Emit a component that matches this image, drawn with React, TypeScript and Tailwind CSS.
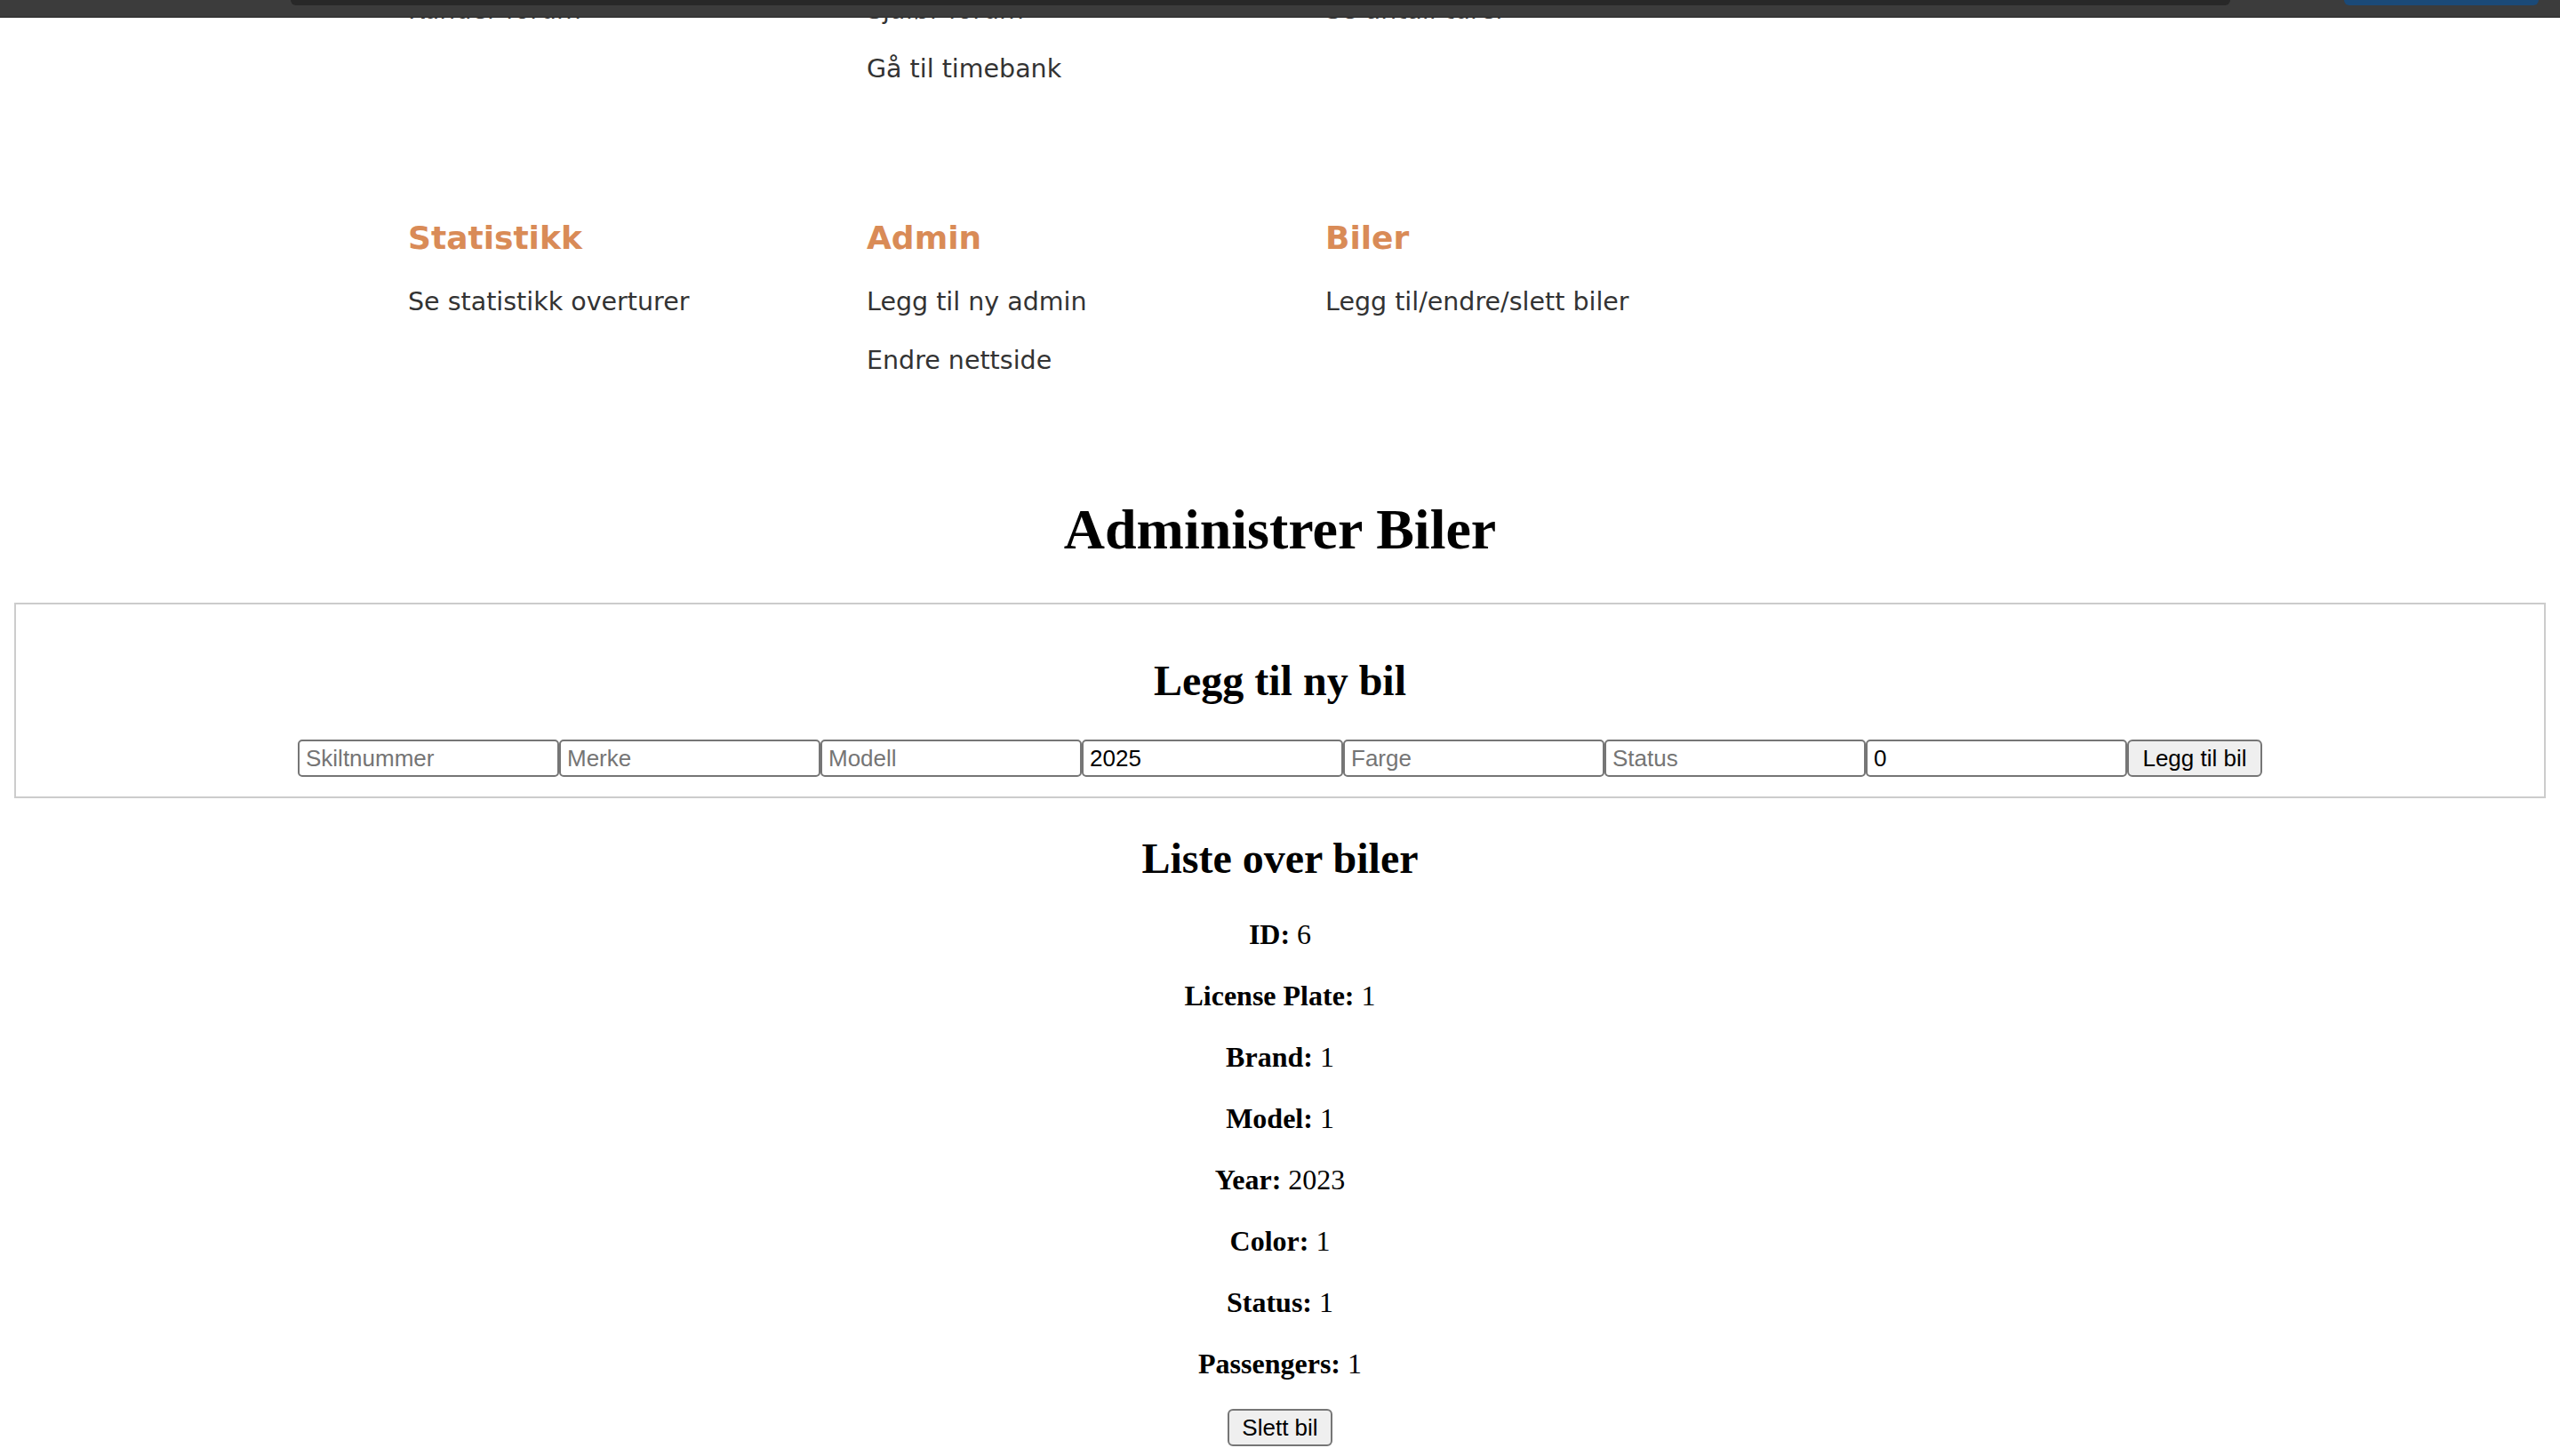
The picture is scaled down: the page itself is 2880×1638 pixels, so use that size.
import React from "react";

const navRow1: string[][] = [
  ["Kunder forum"],
  ["Sjåfør forum", "Gå til timebank"],
  ["Se antall turer"],
];

const navRow2: { title: string; items: string[] }[] = [
  { title: "Statistikk", items: ["Se statistikk overturer"] },
  { title: "Admin", items: ["Legg til ny admin", "Endre nettside"] },
  { title: "Biler", items: ["Legg til/endre/slett biler"] },
];

const fields: { placeholder: string; value?: string }[] = [
  { placeholder: "Skiltnummer" },
  { placeholder: "Merke" },
  { placeholder: "Modell" },
  { placeholder: "År", value: "2025" },
  { placeholder: "Farge" },
  { placeholder: "Status" },
  { placeholder: "Passasjerer", value: "0" },
];

const details: [string, string][] = [
  ["ID:", "6"],
  ["License Plate:", "1"],
  ["Brand:", "1"],
  ["Model:", "1"],
  ["Year:", "2023"],
  ["Color:", "1"],
  ["Status:", "1"],
  ["Passengers:", "1"],
];

export default function App() {
  return (
    <div className="relative h-[1638px] overflow-hidden bg-white">
      <div className="flex flex-col mt-[-21px]">
        {/* Navigation groups */}
        <div className="flex flex-col pl-[459px] font-['DejaVu_Sans',Verdana,sans-serif] text-[#333333]">
          <div className="grid grid-cols-[516px_516px_516px]">
            {navRow1.map((col, i) => (
              <div key={i} className="flex flex-col">
                {col.map((item) => (
                  <span key={item} className="text-[28.5px] leading-[66px]">
                    {item}
                  </span>
                ))}
              </div>
            ))}
          </div>
          <div className="grid grid-cols-[516px_516px_516px] mt-[136px]">
            {navRow2.map((col) => (
              <div key={col.title} className="flex flex-col">
                <span className="text-[36px] leading-[42px] font-bold text-[#d98b57]">
                  {col.title}
                </span>
                <div className="flex flex-col mt-[18px]">
                  {col.items.map((item) => (
                    <span key={item} className="text-[28.5px] leading-[66px]">
                      {item}
                    </span>
                  ))}
                </div>
              </div>
            ))}
          </div>
        </div>

        {/* Main heading */}
        <h1 className="mt-[120px] mb-[45px] text-center text-[64px] leading-[74px] font-bold font-['Liberation_Serif','Times_New_Roman',serif] text-black">
          Administrer Biler
        </h1>

        {/* Add car box */}
        <div className="mx-[16px] border-2 border-[#cccccc] pt-[20px] px-[20px] pb-[22px] flex flex-col">
          <h2 className="mt-[38px] mb-[39px] text-center text-[48px] leading-[55px] font-bold font-['Liberation_Serif','Times_New_Roman',serif] text-black">
            Legg til ny bil
          </h2>
          <div className="flex justify-center">
            {fields.map((f) => (
              <input
                key={f.placeholder}
                placeholder={f.placeholder}
                defaultValue={f.value}
                className="w-[294px] h-[42px] border-2 border-[#767676] rounded-[5px] bg-white px-[7px] text-[26px] text-black placeholder:text-[#757575] font-['Liberation_Sans',Arial,sans-serif] outline-none"
              />
            ))}
            <button className="w-[152px] h-[42px] border-2 border-[#767676] rounded-[6px] bg-[#efefef] text-[26px] text-black font-['Liberation_Sans',Arial,sans-serif]">
              Legg til bil
            </button>
          </div>
        </div>

        {/* Car list */}
        <h2 className="mt-[40px] mb-[40px] text-center text-[48px] leading-[55px] font-bold font-['Liberation_Serif','Times_New_Roman',serif] text-black">
          Liste over biler
        </h2>
        <div className="flex flex-col items-center font-['Liberation_Serif','Times_New_Roman',serif] text-black">
          {details.map(([label, value]) => (
            <p key={label} className="text-[32px] leading-[37px] mb-[32px] text-center">
              <strong className="font-bold">{label}</strong> {value}
            </p>
          ))}
          <button className="w-[118px] h-[42px] border-2 border-[#767676] rounded-[6px] bg-[#efefef] text-[26px] text-black font-['Liberation_Sans',Arial,sans-serif]">
            Slett bil
          </button>
        </div>
      </div>

      {/* Browser overlay bar at top */}
      <div className="absolute top-0 left-0 right-0 h-[20px] bg-[#3c3c3c] border-b-2 border-[#363636]">
        <div className="absolute top-0 left-[327px] w-[2182px] h-[6px] bg-[#282828] rounded-b-[10px]" />
        <div className="absolute top-0 left-[2637px] w-[219px] h-[6px] bg-[#1b4a78] rounded-b-[10px]" />
      </div>
    </div>
  );
}
